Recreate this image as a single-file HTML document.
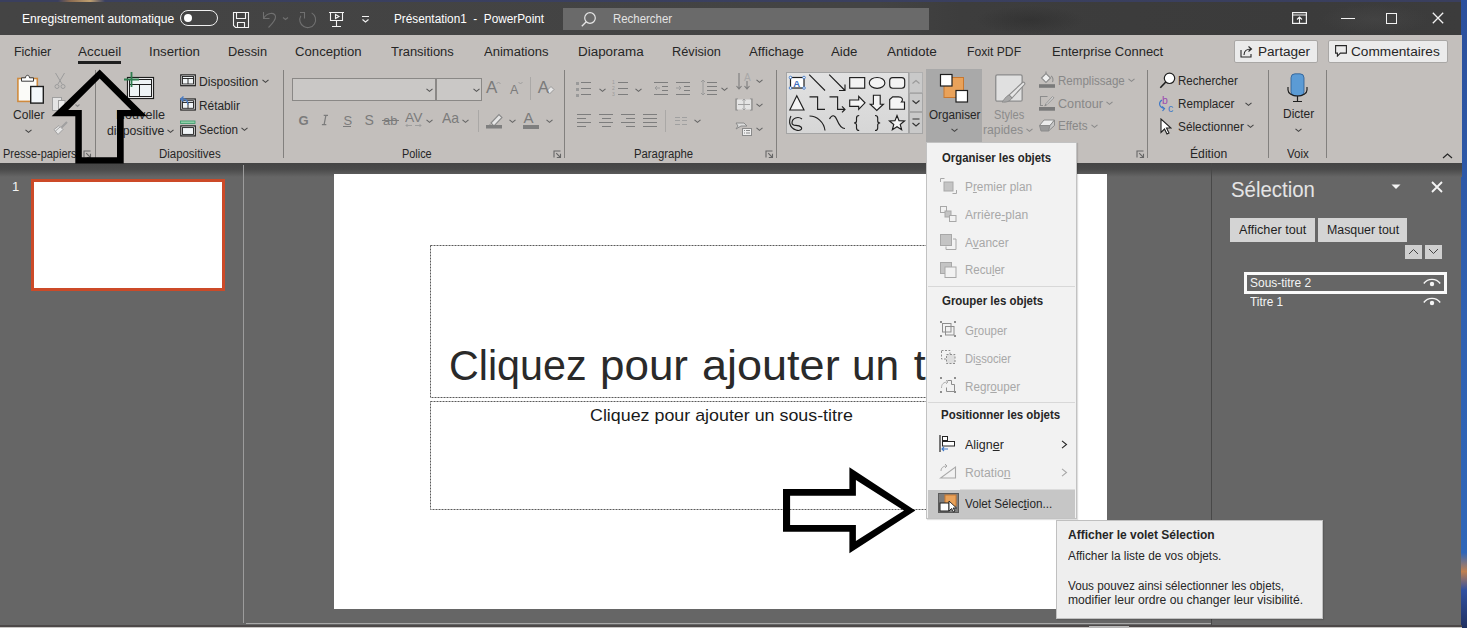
<!DOCTYPE html><html><head><meta charset="utf-8"><style>
html,body{margin:0;padding:0}
body{width:1467px;height:628px;overflow:hidden;position:relative;font-family:"Liberation Sans",sans-serif}
.a{position:absolute}
.t{position:absolute;line-height:0;white-space:pre}
</style></head><body>
<div class="a" style="left:0px;top:0px;width:1467px;height:628px;background:#666666"></div><div class="a" style="left:0px;top:0px;width:1462px;height:35px;background:linear-gradient(90deg,#444 0,#434343 880px,#3d3d3d 960px,#3b3b3b 1300px,#3c3c3c 100%)"></div><div class="a" style="left:1320px;top:4px;width:110px;height:30px;background:radial-gradient(ellipse at center,rgba(80,80,80,.35),rgba(80,80,80,0) 70%)"></div><div class="a" style="left:975px;top:6px;width:110px;height:28px;background:radial-gradient(ellipse at center,rgba(40,40,40,.45),rgba(40,40,40,0) 70%)"></div><div class="a" style="left:0px;top:0px;width:1462px;height:2px;background:linear-gradient(90deg,#3a3f5e 0,#3a3f5e 58px,#8a6a50 70px,#c0a070 90px,#3a4060 105px,#3a3f5e 100%)"></div><div class="a" style="left:1461px;top:0px;width:6px;height:628px;background:linear-gradient(#2b4f9c,#3060b0 50%,#2f66b8 88%,#c08050 91%,#3050a0 94%,#203060)"></div><div class="a" style="left:0px;top:35px;width:1462px;height:128px;background:#c3bfbc"></div><div class="a" style="left:0px;top:163px;width:1462px;height:14px;background:linear-gradient(#444 0,#4a4a4a 45%,#666666 100%)"></div><div class="a" style="left:180px;top:10px;width:38px;height:16px;box-sizing:border-box;border:1.5px solid #f0f0f0;border-radius:8px"></div><div class="a" style="left:184px;top:14px;width:8px;height:8px;background:#fff;border-radius:50%"></div><svg class="a" style="left:232px;top:11px;" width="18" height="18" viewBox="0 0 18 18"><path d="M1.5 1.5H16.5V16.5H3.5L1.5 14.5Z M4.5 1.5V7.5H13.5V1.5 M5.5 16.5V11.5H12.5V16.5" fill="none" stroke="#f4f4f4" stroke-width="1.1"/></svg><svg class="a" style="left:261px;top:10px;" width="30" height="20" viewBox="0 0 30 20"><path d="M2.5 2V8.5H8.5 M2.8 8C6 3 13.5 1.5 14.5 6.5C15 10 11 14 7.5 17.5 M22 7.5L24.5 9.5L27 7.5" fill="none" stroke="#707070" stroke-width="1.1"/></svg><svg class="a" style="left:298px;top:10px;" width="20" height="20" viewBox="0 0 20 20"><path d="M13.65 2.86A7.9 7.9 0 1 1 2.86 5.75 M2 2.5H6.5V8.4" fill="none" stroke="#707070" stroke-width="1.1"/></svg><svg class="a" style="left:328px;top:11px;" width="18" height="18" viewBox="0 0 18 18"><path d="M1 1.5H16 M2.5 1.5V9.5H14.5V1.5 M7.5 3.5L11 5.5L7.5 7.5Z M8.5 9.5V15.5 M4 15.5H13" fill="none" stroke="#f4f4f4" stroke-width="1.1"/></svg><svg class="a" style="left:360px;top:14px;" width="12" height="10" viewBox="0 0 12 10"><path d="M2 2.5H9 M2.5 5.5L5.5 8L8.5 5.5" fill="none" stroke="#f4f4f4" stroke-width="1.1"/></svg><div class="a" style="left:563px;top:8px;width:366px;height:22px;background:#6a6a6a"></div><svg class="a" style="left:580px;top:11px;" width="18" height="16" viewBox="0 0 18 16"><circle cx="10" cy="7" r="5.3" fill="none" stroke="#e6e6e6" stroke-width="1.2"/><path d="M6.3 10.7l-4.5 4.5" stroke="#e6e6e6" stroke-width="1.3"/></svg><svg class="a" style="left:1292px;top:12px;" width="15" height="12" viewBox="0 0 15 12"><rect x="0.6" y="0.6" width="13.8" height="10.8" fill="none" stroke="#f2f2f2" stroke-width="1.2"/><path d="M0.6 3h13.8M7.5 11v-6M5 7.5l2.5-2.5l2.5 2.5" fill="none" stroke="#f2f2f2" stroke-width="1.1"/></svg><div class="a" style="left:1341px;top:18px;width:14px;height:1.2px;background:#f2f2f2"></div><div class="a" style="left:1386px;top:13px;width:11px;height:11px;box-sizing:border-box;border:1.2px solid #f2f2f2"></div><svg class="a" style="left:1432px;top:12px;" width="12" height="12" viewBox="0 0 12 12"><path d="M0.8 0.8l10.4 10.4M11.2 0.8l-10.4 10.4" stroke="#f2f2f2" stroke-width="1.3"/></svg><div class="a" style="left:78px;top:61px;width:43px;height:2.6px;background:#1f1f1f"></div><div class="a" style="left:1234px;top:40px;width:84px;height:22.5px;box-sizing:border-box;background:#ebebeb;border:1px solid #a9a7a5;border-radius:2px"></div><svg class="a" style="left:1240px;top:45px;" width="14" height="13" viewBox="0 0 14 13"><path d="M1 5v7h10v-3" fill="none" stroke="#262626" stroke-width="1.1"/><path d="M4 10c0-4 3-6 7-6M8.5 1.5l3 2.5l-3 2.5" fill="none" stroke="#262626" stroke-width="1.1"/></svg><div class="a" style="left:1328px;top:40px;width:120px;height:22.5px;box-sizing:border-box;background:#ebebeb;border:1px solid #a9a7a5;border-radius:2px"></div><svg class="a" style="left:1335px;top:45px;" width="12" height="12" viewBox="0 0 12 12"><path d="M0.6 0.6h10.8v7.5h-6l-3 3v-3h-1.8z" fill="none" stroke="#262626" stroke-width="1.1"/></svg><div class="a" style="left:95px;top:70px;width:1px;height:88px;background:#82807e"></div><div class="a" style="left:283px;top:70px;width:1px;height:88px;background:#82807e"></div><div class="a" style="left:564px;top:70px;width:1px;height:88px;background:#82807e"></div><div class="a" style="left:776px;top:70px;width:1px;height:88px;background:#82807e"></div><div class="a" style="left:1147px;top:70px;width:1px;height:88px;background:#82807e"></div><div class="a" style="left:1268px;top:70px;width:1px;height:88px;background:#82807e"></div><div class="a" style="left:1326px;top:70px;width:1px;height:88px;background:#82807e"></div><svg class="a" style="left:83px;top:149.5px;" width="9" height="9" viewBox="0 0 9 9"><path d="M1 7.5V1H7.5 M3.2 3.2L7.5 7.5 M7.5 3.8V7.5H3.8" fill="none" stroke="#666" stroke-width="1.1"/></svg><svg class="a" style="left:553px;top:149.5px;" width="9" height="9" viewBox="0 0 9 9"><path d="M1 7.5V1H7.5 M3.2 3.2L7.5 7.5 M7.5 3.8V7.5H3.8" fill="none" stroke="#666" stroke-width="1.1"/></svg><svg class="a" style="left:765px;top:149.5px;" width="9" height="9" viewBox="0 0 9 9"><path d="M1 7.5V1H7.5 M3.2 3.2L7.5 7.5 M7.5 3.8V7.5H3.8" fill="none" stroke="#666" stroke-width="1.1"/></svg><svg class="a" style="left:1135.5px;top:149.5px;" width="9" height="9" viewBox="0 0 9 9"><path d="M1 7.5V1H7.5 M3.2 3.2L7.5 7.5 M7.5 3.8V7.5H3.8" fill="none" stroke="#666" stroke-width="1.1"/></svg><svg class="a" style="left:16px;top:72px;" width="30" height="33" viewBox="0 0 30 33"><rect x="1.9" y="6.5" width="19.4" height="22.9" fill="#fbfbf8" stroke="#cf8a3e" stroke-width="1.6"/><path d="M5.5 9.2V5.8H9.5C9.5 2.5 13.5 2.5 13.5 5.8H17.5V9.2Z" fill="#fff" stroke="#3a3a3a" stroke-width="1"/><rect x="14.7" y="14.5" width="12.6" height="16.6" fill="#f4f8fb" stroke="#1e1e1e" stroke-width="1.4"/></svg><svg class="a" style="left:24.5px;top:128.5px;" width="7" height="5" viewBox="0 0 7 5"><path d="M0.5 0.8l3.0 2.5l3.0 -2.5" fill="none" stroke="#444" stroke-width="1.1"/></svg><svg class="a" style="left:54px;top:72px;" width="12" height="18" viewBox="0 0 12 18"><path d="M1.5 1L8 12M10.5 1L4 12" stroke="#9c9c9c" stroke-width="1"/><circle cx="3" cy="14.5" r="2" fill="none" stroke="#9c9c9c"/><circle cx="9" cy="14.5" r="2" fill="none" stroke="#9c9c9c"/></svg><svg class="a" style="left:51px;top:96px;" width="30" height="16" viewBox="0 0 30 16"><rect x="1.5" y="1.5" width="9" height="13" fill="#e4e4e4" stroke="#a0a0a0"/><rect x="7.5" y="4.5" width="6.5" height="10" fill="#ececec" stroke="#a0a0a0"/><path d="M24.5 8.5L26.5 10.5L28.5 8.5" fill="none" stroke="#8a8a8a" stroke-width="1.1"/></svg><svg class="a" style="left:52px;top:120px;" width="17" height="16" viewBox="0 0 17 16"><path d="M15 2L9.5 7.5" stroke="#a0a0a0" stroke-width="2.2"/><path d="M2 9.5L7 5.5L11 9.5L6 14.5Z" fill="#e6e6e6" stroke="#a0a0a0"/><path d="M3.5 11L8 7" stroke="#a0a0a0"/></svg><svg class="a" style="left:123px;top:71px;" width="32" height="29" viewBox="0 0 32 29"><rect x="4.5" y="6.5" width="26" height="21" fill="#fff" stroke="#1e1e1e" stroke-width="1.2"/><rect x="6.5" y="8.5" width="22" height="17" fill="#eef3f5" stroke="#1e1e1e" stroke-width="1"/><path d="M6.5 13.5H28.5M16.5 13.5V25.5" stroke="#1e1e1e" stroke-width="1"/><path d="M8.5 1V16M1 8.5H16" stroke="#2e7d4f" stroke-width="1.8"/></svg><svg class="a" style="left:167px;top:129px;" width="7" height="5" viewBox="0 0 7 5"><path d="M0.5 0.8l3.0 2.5l3.0 -2.5" fill="none" stroke="#444" stroke-width="1.1"/></svg><svg class="a" style="left:179px;top:73px;" width="18" height="15" viewBox="0 0 18 15"><rect x="1.8" y="1.9" width="14.5" height="10.8" fill="#fff" stroke="#1e1e1e" stroke-width="1.2"/><rect x="3.5" y="3.5" width="11" height="7.5" fill="#f0f4f6" stroke="#1e1e1e" stroke-width="0.9"/><path d="M3.5 5.5H14.5M9 5.5V11" stroke="#1e1e1e" stroke-width="0.9"/></svg><svg class="a" style="left:261.5px;top:78.8px;" width="7" height="5" viewBox="0 0 7 5"><path d="M0.5 0.8l3.0 2.5l3.0 -2.5" fill="none" stroke="#444" stroke-width="1.1"/></svg><svg class="a" style="left:179px;top:95px;" width="18" height="17" viewBox="0 0 18 17"><rect x="1.8" y="4" width="14.5" height="11" fill="#fff" stroke="#1e1e1e" stroke-width="1.2"/><rect x="3.5" y="5.7" width="11" height="7.6" fill="#f0f4f6" stroke="#1e1e1e" stroke-width="0.9"/><path d="M3.5 7.5H14.5M9 7.5V13.3" stroke="#1e1e1e" stroke-width="0.9"/><path d="M9 9.5C9 5 6 3.5 2.5 4M4.5 1.5L1.8 4L4.5 6.5" fill="none" stroke="#4a7cc4" stroke-width="1.4"/></svg><svg class="a" style="left:179px;top:119px;" width="18" height="19" viewBox="0 0 18 19"><rect x="1.5" y="2" width="14.5" height="2.5" fill="#8fd0a8" stroke="#3a9a6a" stroke-width="0.8"/><rect x="1.8" y="6.9" width="14.5" height="10" fill="#fff" stroke="#1e1e1e" stroke-width="1.2"/><rect x="3.5" y="8.6" width="11" height="6.8" fill="#f0f4f6" stroke="#1e1e1e" stroke-width="0.9"/></svg><svg class="a" style="left:241px;top:127.3px;" width="7" height="5" viewBox="0 0 7 5"><path d="M0.5 0.8l3.0 2.5l3.0 -2.5" fill="none" stroke="#444" stroke-width="1.1"/></svg><div class="a" style="left:292px;top:78px;width:144px;height:23px;box-sizing:border-box;background:#cac8c6;border:1px solid #8a8886"></div><div class="a" style="left:436px;top:78px;width:46px;height:23px;box-sizing:border-box;background:#cac8c6;border:1px solid #8a8886"></div><svg class="a" style="left:426px;top:87.5px;" width="7" height="5" viewBox="0 0 7 5"><path d="M0.5 0.8l3.0 2.5l3.0 -2.5" fill="none" stroke="#555" stroke-width="1.1"/></svg><svg class="a" style="left:473px;top:87.5px;" width="7" height="5" viewBox="0 0 7 5"><path d="M0.5 0.8l3.0 2.5l3.0 -2.5" fill="none" stroke="#555" stroke-width="1.1"/></svg><svg class="a" style="left:320px;top:114px;" width="10" height="12" viewBox="0 0 10 12"><path d="M3.7 1.4H8 M1.9 10.6H6.3 M5.9 1.4L4.1 10.6" fill="none" stroke="#7b7b7b" stroke-width="1.2"/></svg><div class="a" style="left:343px;top:126px;width:8px;height:1.2px;background:#7b7b7b"></div><div class="a" style="left:382px;top:120px;width:17px;height:1.2px;background:#7b7b7b"></div><svg class="a" style="left:405px;top:123px;" width="17" height="5" viewBox="0 0 17 5"><path d="M1 2.5h6M10 2.5h6M2.5 1l-1.5 1.5l1.5 1.5M14.5 1l1.5 1.5l-1.5 1.5" fill="none" stroke="#9a9a9a" stroke-width="0.9"/></svg><svg class="a" style="left:425.5px;top:118.5px;" width="7" height="5" viewBox="0 0 7 5"><path d="M0.5 0.8l3.0 2.5l3.0 -2.5" fill="none" stroke="#666" stroke-width="1.1"/></svg><svg class="a" style="left:496px;top:81px;" width="5" height="4" viewBox="0 0 5 4"><path d="M0.5 3l2-2l2 2" fill="none" stroke="#9a9a9a" stroke-width="0.9"/></svg><svg class="a" style="left:518px;top:81px;" width="5" height="4" viewBox="0 0 5 4"><path d="M0.5 1l2 2l2-2" fill="none" stroke="#9a9a9a" stroke-width="0.9"/></svg><div class="a" style="left:530px;top:77px;width:1px;height:23px;background:#aaa8a6"></div><svg class="a" style="left:545px;top:85px;" width="10" height="10" viewBox="0 0 10 10"><path d="M1.5 6l4.5-4.5l3 3l-4.5 4.5z" fill="#e6e6e6" stroke="#9a9a9a" stroke-width="1"/></svg><svg class="a" style="left:461.5px;top:118.5px;" width="7" height="5" viewBox="0 0 7 5"><path d="M0.5 0.8l3.0 2.5l3.0 -2.5" fill="none" stroke="#666" stroke-width="1.1"/></svg><div class="a" style="left:478px;top:110px;width:1px;height:22px;background:#aaa8a6"></div><svg class="a" style="left:486px;top:113px;" width="17" height="16" viewBox="0 0 17 16"><path d="M5 10l8-8.5l3 3l-8 8.5z" fill="#e6e6e6" stroke="#8a8a8a" stroke-width="1.1"/><path d="M4 11l-2 2h4" fill="#8a8a8a"/><rect x="0" y="12" width="16" height="3.5" fill="#7f7f7f"/></svg><svg class="a" style="left:508.5px;top:118.8px;" width="7" height="5" viewBox="0 0 7 5"><path d="M0.5 0.8l3.0 2.5l3.0 -2.5" fill="none" stroke="#666" stroke-width="1.1"/></svg><div class="a" style="left:523px;top:125px;width:16px;height:3.5px;background:#7f7f7f"></div><svg class="a" style="left:545.5px;top:118.8px;" width="7" height="5" viewBox="0 0 7 5"><path d="M0.5 0.8l3.0 2.5l3.0 -2.5" fill="none" stroke="#666" stroke-width="1.1"/></svg><div class="a" style="left:576px;top:81.5px;width:3px;height:3px;background:#9a9a9a"></div><div class="a" style="left:576px;top:87.5px;width:3px;height:3px;background:#9a9a9a"></div><div class="a" style="left:576px;top:93.5px;width:3px;height:3px;background:#9a9a9a"></div><div class="a" style="left:581px;top:82px;width:10px;height:1.3px;background:#7d7d7d"></div><div class="a" style="left:581px;top:88px;width:10px;height:1.3px;background:#7d7d7d"></div><div class="a" style="left:581px;top:94px;width:10px;height:1.3px;background:#7d7d7d"></div><svg class="a" style="left:598.5px;top:87.5px;" width="7" height="5" viewBox="0 0 7 5"><path d="M0.5 0.8l3.0 2.5l3.0 -2.5" fill="none" stroke="#666" stroke-width="1.1"/></svg><svg class="a" style="left:612px;top:79px;" width="6" height="17" viewBox="0 0 6 17"><text x="0" y="5" font-size="5" fill="#9a9a9a" font-family="Liberation Sans">1</text><text x="0" y="11" font-size="5" fill="#9a9a9a" font-family="Liberation Sans">2</text><text x="0" y="17" font-size="5" fill="#9a9a9a" font-family="Liberation Sans">3</text></svg><div class="a" style="left:618px;top:82px;width:10px;height:1.3px;background:#7d7d7d"></div><div class="a" style="left:618px;top:88px;width:10px;height:1.3px;background:#7d7d7d"></div><div class="a" style="left:618px;top:94px;width:10px;height:1.3px;background:#7d7d7d"></div><svg class="a" style="left:635px;top:87.5px;" width="7" height="5" viewBox="0 0 7 5"><path d="M0.5 0.8l3.0 2.5l3.0 -2.5" fill="none" stroke="#666" stroke-width="1.1"/></svg><div class="a" style="left:654px;top:82px;width:14px;height:1.3px;background:#7d7d7d"></div><div class="a" style="left:662px;top:86px;width:6px;height:1.3px;background:#7d7d7d"></div><div class="a" style="left:662px;top:90px;width:6px;height:1.3px;background:#7d7d7d"></div><div class="a" style="left:654px;top:94px;width:14px;height:1.3px;background:#7d7d7d"></div><svg class="a" style="left:654px;top:85px;" width="7" height="6" viewBox="0 0 7 6"><path d="M6 3h-5M3 1l-2 2l2 2" fill="none" stroke="#9a9a9a"/></svg><div class="a" style="left:676px;top:82px;width:14px;height:1.3px;background:#7d7d7d"></div><div class="a" style="left:684px;top:86px;width:6px;height:1.3px;background:#7d7d7d"></div><div class="a" style="left:684px;top:90px;width:6px;height:1.3px;background:#7d7d7d"></div><div class="a" style="left:676px;top:94px;width:14px;height:1.3px;background:#7d7d7d"></div><svg class="a" style="left:676px;top:85px;" width="7" height="6" viewBox="0 0 7 6"><path d="M0 3h5M3 1l2 2l-2 2" fill="none" stroke="#9a9a9a"/></svg><svg class="a" style="left:700px;top:79px;" width="6" height="17" viewBox="0 0 6 17"><path d="M3 1v15M1 3l2-2l2 2M1 14l2 2l2-2" fill="none" stroke="#9a9a9a"/></svg><div class="a" style="left:707px;top:82px;width:9.6px;height:1.3px;background:#7d7d7d"></div><div class="a" style="left:707px;top:86px;width:9.6px;height:1.3px;background:#7d7d7d"></div><div class="a" style="left:707px;top:90px;width:9.6px;height:1.3px;background:#7d7d7d"></div><div class="a" style="left:707px;top:94px;width:9.6px;height:1.3px;background:#7d7d7d"></div><svg class="a" style="left:721px;top:87.2px;" width="7" height="5" viewBox="0 0 7 5"><path d="M0.5 0.8l3.0 2.5l3.0 -2.5" fill="none" stroke="#666" stroke-width="1.1"/></svg><div class="a" style="left:577px;top:114px;width:14px;height:1.3px;background:#7d7d7d"></div><div class="a" style="left:577px;top:118px;width:9px;height:1.3px;background:#7d7d7d"></div><div class="a" style="left:577px;top:122px;width:14px;height:1.3px;background:#7d7d7d"></div><div class="a" style="left:577px;top:126px;width:9px;height:1.3px;background:#7d7d7d"></div><div class="a" style="left:599px;top:114px;width:14px;height:1.3px;background:#7d7d7d"></div><div class="a" style="left:602px;top:118px;width:9px;height:1.3px;background:#7d7d7d"></div><div class="a" style="left:599px;top:122px;width:14px;height:1.3px;background:#7d7d7d"></div><div class="a" style="left:602px;top:126px;width:9px;height:1.3px;background:#7d7d7d"></div><div class="a" style="left:621px;top:114px;width:14px;height:1.3px;background:#7d7d7d"></div><div class="a" style="left:626px;top:118px;width:9px;height:1.3px;background:#7d7d7d"></div><div class="a" style="left:621px;top:122px;width:14px;height:1.3px;background:#7d7d7d"></div><div class="a" style="left:626px;top:126px;width:9px;height:1.3px;background:#7d7d7d"></div><div class="a" style="left:643px;top:114px;width:14px;height:1.3px;background:#7d7d7d"></div><div class="a" style="left:643px;top:118px;width:14px;height:1.3px;background:#7d7d7d"></div><div class="a" style="left:643px;top:122px;width:14px;height:1.3px;background:#7d7d7d"></div><div class="a" style="left:643px;top:126px;width:14px;height:1.3px;background:#7d7d7d"></div><div class="a" style="left:665px;top:110px;width:1px;height:22px;background:#aaa8a6"></div><div class="a" style="left:675px;top:117px;width:5px;height:1.3px;background:#a0a0a0"></div><div class="a" style="left:675px;top:120px;width:5px;height:1.3px;background:#a0a0a0"></div><div class="a" style="left:675px;top:124px;width:5px;height:1.3px;background:#a0a0a0"></div><div class="a" style="left:682px;top:117px;width:5px;height:1.3px;background:#a0a0a0"></div><div class="a" style="left:682px;top:120px;width:5px;height:1.3px;background:#a0a0a0"></div><div class="a" style="left:682px;top:124px;width:5px;height:1.3px;background:#a0a0a0"></div><svg class="a" style="left:693.5px;top:118.5px;" width="7" height="5" viewBox="0 0 7 5"><path d="M0.5 0.8l3.0 2.5l3.0 -2.5" fill="none" stroke="#666" stroke-width="1.1"/></svg><svg class="a" style="left:736px;top:72px;" width="16" height="18" viewBox="0 0 16 18"><path d="M3 1v16M0.5 14l2.5 3l2.5-3M11 9v8M8.5 14l2.5 3l2.5-3" fill="none" stroke="#7d7d7d" stroke-width="1.1"/><text x="8" y="9" font-size="10" fill="#a8a8a8" font-family="Liberation Sans">A</text></svg><svg class="a" style="left:756px;top:79px;" width="7" height="5" viewBox="0 0 7 5"><path d="M0.5 0.8l3.0 2.5l3.0 -2.5" fill="none" stroke="#666" stroke-width="1.1"/></svg><svg class="a" style="left:735px;top:98px;" width="18" height="14" viewBox="0 0 18 14"><path d="M3 1h-2v11h2M15 1h2v11h-2" fill="none" stroke="#8a8a8a" stroke-width="1.2"/><rect x="2" y="1.5" width="14" height="10" fill="#e4e4e4"/><path d="M3 6.5h12M9 1l-1.5 1.5M9 1l1.5 1.5M9 1v11M9 12l-1.5-1.5M9 12l1.5-1.5" fill="none" stroke="#a0a0a0" stroke-width="1"/></svg><svg class="a" style="left:756px;top:103.4px;" width="7" height="5" viewBox="0 0 7 5"><path d="M0.5 0.8l3.0 2.5l3.0 -2.5" fill="none" stroke="#666" stroke-width="1.1"/></svg><svg class="a" style="left:735px;top:122px;" width="18" height="14" viewBox="0 0 18 14"><path d="M1 1h8l3 3h-6l-5 3l2-3z" fill="#dcdcdc" stroke="#8a8a8a" stroke-width="1"/><rect x="7.5" y="6.5" width="9" height="7" fill="#eee" stroke="#8a8a8a" stroke-width="1"/><path d="M9 8.5h1M11 8.5h4M9 11h1M11 11h4" stroke="#8a8a8a"/></svg><svg class="a" style="left:756px;top:126.5px;" width="7" height="5" viewBox="0 0 7 5"><path d="M0.5 0.8l3.0 2.5l3.0 -2.5" fill="none" stroke="#666" stroke-width="1.1"/></svg><div class="a" style="left:786px;top:72px;width:123px;height:62px;box-sizing:border-box;background:linear-gradient(#e2e2e2,#d6d6d6);border:1px solid #a4a4a4"></div><div class="a" style="left:909px;top:72px;width:14px;height:21px;box-sizing:border-box;background:#c9c9c9;border:1px solid #b0b0b0"></div><div class="a" style="left:909px;top:93px;width:14px;height:19px;box-sizing:border-box;background:#c9c9c9;border:1px solid #a6a6a6"></div><div class="a" style="left:909px;top:112px;width:14px;height:22px;box-sizing:border-box;background:#c9c9c9;border:1px solid #a6a6a6"></div><svg class="a" style="left:911px;top:79px;" width="10" height="6" viewBox="0 0 10 6"><path d="M1.5 4.5l3.5-3l3.5 3" fill="none" stroke="#9a9a9a" stroke-width="1.1"/></svg><svg class="a" style="left:911px;top:99px;" width="10" height="6" viewBox="0 0 10 6"><path d="M1.5 1.5l3.5 3l3.5-3" fill="none" stroke="#333" stroke-width="1.1"/></svg><svg class="a" style="left:911px;top:117px;" width="10" height="12" viewBox="0 0 10 12"><path d="M1.5 2h7M1.5 6l3.5 3l3.5-3" fill="none" stroke="#333" stroke-width="1.1"/></svg><svg class="a" style="left:784px;top:70px;" width="126" height="66" viewBox="0 0 126 66">
<rect x="6.5" y="7.5" width="13.5" height="10.5" fill="#fff" stroke="#1e1e1e" stroke-width="1.2"/>
<text x="9.3" y="16.6" font-size="9.5" font-weight="bold" fill="#3f6fc0" font-family="Liberation Sans">A</text>
<g fill="#fff" stroke="#3f78c8" stroke-width="0.9"><circle cx="6.5" cy="7.5" r="1.3"/><circle cx="20" cy="7.5" r="1.3"/><circle cx="6.5" cy="18" r="1.3"/><circle cx="20" cy="18" r="1.3"/></g>
<g fill="none" stroke="#1e1e1e" stroke-width="1.15">
<path d="M25.2 4.7L41 20.5"/>
<path d="M45.2 4.7L61 20.5M61 14.5V20.5H55"/>
<path d="M25.5 26.8H33.6V39.4H41"/>
<path d="M45.5 26.8H53.6V39.4H61M58 36.4L61 39.4L58 42.4"/>
<path d="M7 46C4 52 6 58 12 60C16 61.5 19 59 17 57C14 54 8 57 8 53C8 48 14 46 18 49"/>
<path d="M25.5 46C33 46 40 52 41 60.5"/>
<path d="M45.5 49C48 44 51 45 53 50C55 55 58 58.5 61 58.5"/>
<path d="M75.2 45.5C73 45.5 72.5 46 72.5 48V51C72.5 52.5 71.5 53 70 53C71.5 53 72.5 53.5 72.5 55V58C72.5 60 73 60.5 75.2 60.5"/>
<path d="M91 45.5C93.2 45.5 93.7 46 93.7 48V51C93.7 52.5 94.7 53 96.2 53C94.7 53 93.7 53.5 93.7 55V58C93.7 60 93.2 60.5 91 60.5"/>
</g>
<g fill="#f4f4f4" stroke="#1e1e1e" stroke-width="1.15">
<rect x="65.7" y="7.6" width="15" height="10.6"/>
<ellipse cx="93.1" cy="12.9" rx="7.8" ry="5.4"/>
<rect x="105.7" y="7.6" width="15" height="10.6" rx="3"/>
<path d="M12.8 25.8L5.8 40H20Z"/>
<path d="M65.7 30H74.7V26.3L81 32.8L74.7 39.4V36.3H65.7Z"/>
<path d="M89.4 25.2H96.2V34.2H99.4L92.8 40.5L86.2 34.2H89.4Z"/>
<path d="M105.7 29.5L108.7 26.8H114.5C118 26.8 119.8 29.5 117.5 32H120.5V39.2H105.7Z"/>
<path d="M113.00 45.50 L115.00 50.65 L120.51 50.96 L116.23 54.45 L117.64 59.79 L113.00 56.80 L108.36 59.79 L109.77 54.45 L105.49 50.96 L111.00 50.65Z"/>
</g>
</svg><div class="a" style="left:926px;top:69px;width:56px;height:73px;background:#a9a9a9"></div><svg class="a" style="left:939px;top:73px;" width="30" height="30" viewBox="0 0 30 30"><rect x="5" y="4.5" width="19.5" height="20" fill="#e9a25a" stroke="#c87830" stroke-width="1"/><rect x="1.5" y="1.5" width="11.5" height="11.5" fill="#fff" stroke="#1e1e1e" stroke-width="1.2"/><rect x="17" y="17.5" width="11.5" height="11.5" fill="#fff" stroke="#1e1e1e" stroke-width="1.2"/></svg><svg class="a" style="left:950.5px;top:128px;" width="7" height="5" viewBox="0 0 7 5"><path d="M0.5 0.8l3.0 2.5l3.0 -2.5" fill="none" stroke="#444" stroke-width="1.1"/></svg><svg class="a" style="left:993px;top:73px;" width="34" height="31" viewBox="0 0 34 31"><rect x="2.75" y="1.95" width="26.4" height="26.2" rx="1.5" fill="#e0e0e0" stroke="#8c8c8c" stroke-width="1.3"/><path d="M29.5 9.5C31 8.5 32.5 10 31.5 11.5L19 25L16 22Z" fill="#e6e6e6" stroke="#8c8c8c" stroke-width="1.1"/><path d="M16 22L19 25C17 28.5 13 29.5 9 29C11 27 13 23 16 22Z" fill="#a8a8a8" stroke="#8c8c8c" stroke-width="1"/></svg><svg class="a" style="left:1026px;top:128px;" width="7" height="5" viewBox="0 0 7 5"><path d="M0.5 0.8l3.0 2.5l3.0 -2.5" fill="none" stroke="#8a8a8a" stroke-width="1.1"/></svg><svg class="a" style="left:1038px;top:71px;" width="18" height="18" viewBox="0 0 18 18"><path d="M3.5 7L8 2.5L12.5 7L8 11.5Z" fill="#f0f0f0" stroke="#8c8c8c" stroke-width="1.1"/><path d="M8 2.5V0.5M13 5C15 6 15.5 9 14.5 11" fill="none" stroke="#8c8c8c" stroke-width="1.1"/><rect x="1" y="13.2" width="16" height="3.6" fill="#7a7a7a"/></svg><svg class="a" style="left:1127.5px;top:78px;" width="7" height="5" viewBox="0 0 7 5"><path d="M0.5 0.8l3.0 2.5l3.0 -2.5" fill="none" stroke="#8a8a8a" stroke-width="1.1"/></svg><svg class="a" style="left:1038px;top:95px;" width="18" height="17" viewBox="0 0 18 17"><path d="M9.5 1.5H2.5V10.5H5" fill="none" stroke="#8c8c8c" stroke-width="1.1"/><path d="M15.8 2.8L9 9.6L6.8 11L8 8.6L14.6 1.6Z" fill="#e6e6e6" stroke="#8c8c8c" stroke-width="1"/><rect x="1" y="12" width="16" height="3.7" fill="#7a7a7a"/></svg><svg class="a" style="left:1105.5px;top:101px;" width="7" height="5" viewBox="0 0 7 5"><path d="M0.5 0.8l3.0 2.5l3.0 -2.5" fill="none" stroke="#8a8a8a" stroke-width="1.1"/></svg><svg class="a" style="left:1038px;top:118px;" width="18" height="15" viewBox="0 0 18 15"><path d="M1.5 7.5L6 2H16.5L12 7.5Z" fill="#ececec" stroke="#8c8c8c" stroke-width="1"/><path d="M1.5 7.5L3 13H10.5L12 7.5Z" fill="#9a9a9a" stroke="#8c8c8c" stroke-width="1"/><path d="M12 7.5L16.5 2V7.5L10.5 13Z" fill="#c6c6c6" stroke="#8c8c8c" stroke-width="1"/></svg><svg class="a" style="left:1091px;top:124px;" width="7" height="5" viewBox="0 0 7 5"><path d="M0.5 0.8l3.0 2.5l3.0 -2.5" fill="none" stroke="#8a8a8a" stroke-width="1.1"/></svg><svg class="a" style="left:1159px;top:72px;" width="17" height="17" viewBox="0 0 17 17"><circle cx="10.5" cy="6.3" r="5.2" fill="#fff" stroke="#1e1e1e" stroke-width="1.2"/><path d="M6.8 10l-5.5 5.8" stroke="#1e1e1e" stroke-width="1.6"/></svg><svg class="a" style="left:1158px;top:94px;" width="18" height="18" viewBox="0 0 18 18"><text x="4" y="9.5" font-size="10.5" fill="#9a48b0" font-family="Liberation Sans">b</text><text x="10" y="17.5" font-size="10.5" fill="#3f78c8" font-family="Liberation Sans">c</text><path d="M4 6C0.5 8 0.5 13 6 14.5M4 12.5L6.5 14.5L4.5 17" fill="none" stroke="#3f78c8" stroke-width="1.2"/></svg><svg class="a" style="left:1245px;top:101.5px;" width="7" height="5" viewBox="0 0 7 5"><path d="M0.5 0.8l3.0 2.5l3.0 -2.5" fill="none" stroke="#444" stroke-width="1.1"/></svg><svg class="a" style="left:1160px;top:118px;" width="12" height="17" viewBox="0 0 12 17"><path d="M1 1v13.5l3.5-3.5l2.5 5l2-1l-2.5-5h4.5z" fill="#fff" stroke="#1e1e1e" stroke-width="1.1"/></svg><svg class="a" style="left:1247px;top:124.4px;" width="7" height="5" viewBox="0 0 7 5"><path d="M0.5 0.8l3.0 2.5l3.0 -2.5" fill="none" stroke="#444" stroke-width="1.1"/></svg><svg class="a" style="left:1286px;top:73px;" width="22" height="30" viewBox="0 0 22 30"><rect x="5" y="0.8" width="13" height="22" rx="4" fill="#5b9bd5" stroke="#2a5a90" stroke-width="0.8"/><path d="M2 14v3a9.5 6 0 0 0 19 0v-3M11.5 23v5M7 28.5h9" fill="none" stroke="#1e1e1e" stroke-width="1.2"/></svg><svg class="a" style="left:1294.5px;top:128.2px;" width="7" height="5" viewBox="0 0 7 5"><path d="M0.5 0.8l3.0 2.5l3.0 -2.5" fill="none" stroke="#444" stroke-width="1.1"/></svg><svg class="a" style="left:1442px;top:153px;" width="11" height="6" viewBox="0 0 11 6"><path d="M1 5l4.5-4l4.5 4" fill="none" stroke="#262626" stroke-width="1.2"/></svg><div class="a" style="left:31px;top:179px;width:194px;height:112px;box-sizing:border-box;background:#fff;border:3px solid #cc4a28"></div><div class="a" style="left:243px;top:165px;width:1px;height:458px;background:#9c9c9c"></div><div class="a" style="left:334px;top:174px;width:773px;height:435px;background:#fff"></div><div class="a" style="left:246px;top:623px;width:965px;height:1px;background:#a8a8a8"></div><div class="a" style="left:0px;top:625px;width:1462px;height:2px;background:#4c4848"></div><div class="a" style="left:0px;top:627px;width:1462px;height:1px;background:#c8c6c4"></div><div class="a" style="left:1089px;top:626px;width:40px;height:2px;background:#b8b8b8"></div><svg class="a" style="left:0px;top:0px;" width="1467" height="628" viewBox="0 0 1467 628"><path d="M430.5 245.5H1011.5V397.5H430.5Z" fill="none" stroke="#5a5a5a" stroke-width="1" stroke-dasharray="2 1"/></svg><svg class="a" style="left:0px;top:0px;" width="1467" height="628" viewBox="0 0 1467 628"><path d="M430.5 401.5H1011.5V509.5H430.5Z" fill="none" stroke="#5a5a5a" stroke-width="1" stroke-dasharray="2 1"/></svg><div class="a" style="left:1211px;top:163px;width:1px;height:462px;background:#484848"></div><svg class="a" style="left:1391px;top:184px;" width="10" height="5" viewBox="0 0 10 5"><path d="M0.5 0.5h9l-4.5 4.5z" fill="#f4f4f4"/></svg><svg class="a" style="left:1431px;top:181px;" width="12" height="12" viewBox="0 0 12 12"><path d="M1 1l10 10M11 1l-10 10" stroke="#f4f4f4" stroke-width="1.8"/></svg><div class="a" style="left:1230px;top:218px;width:85px;height:24px;background:#d4d4d4"></div><div class="a" style="left:1318px;top:218px;width:89px;height:24px;background:#d4d4d4"></div><div class="a" style="left:1405px;top:245px;width:17px;height:14px;background:#cfcfcf"></div><svg class="a" style="left:1408px;top:248px;" width="11" height="7" viewBox="0 0 11 7"><path d="M1 6l4.5-4.5l4.5 4.5" fill="none" stroke="#444" stroke-width="1"/></svg><div class="a" style="left:1425px;top:245px;width:17px;height:14px;background:#cfcfcf"></div><svg class="a" style="left:1428px;top:248px;" width="11" height="7" viewBox="0 0 11 7"><path d="M1 1l4.5 4.5l4.5-4.5" fill="none" stroke="#444" stroke-width="1"/></svg><div class="a" style="left:1244px;top:272px;width:203px;height:22px;box-sizing:border-box;border:3px solid #fafafa"></div><svg class="a" style="left:1423px;top:278px;" width="18" height="9" viewBox="0 0 18 9"><path d="M0.8 5.5c4-5.5 12.4-5.5 16.4 0" fill="none" stroke="#f4f4f4" stroke-width="1.4"/><circle cx="9" cy="6" r="2.2" fill="#f4f4f4"/></svg><svg class="a" style="left:1423px;top:297px;" width="18" height="9" viewBox="0 0 18 9"><path d="M0.8 5.5c4-5.5 12.4-5.5 16.4 0" fill="none" stroke="#f4f4f4" stroke-width="1.4"/><circle cx="9" cy="6" r="2.2" fill="#f4f4f4"/></svg><svg class="a" style="left:0px;top:0px;pointer-events:none;z-index:5" width="1467" height="628" viewBox="0 0 1467 628"><path fill-rule="evenodd" fill="#000" d="M99.7 69.5L147 116.3H123.7V163.4H75.3V116.3H51.6Z M99.7 78.6L68.2 110H81.8V157.3H117V110H131.1Z"/><path fill-rule="evenodd" fill="#000" d="M783 489.1H849.4V467.2L915.4 510.6L849.4 553.2V531.7H783Z M790.1 495.8V525H855.9V540.9L904 510.6L855.9 479.9V495.8Z"/></svg><div class="a" style="left:926px;top:142px;width:151px;height:377px;box-sizing:border-box;background:#f2f2f2;border:1px solid #c2c2c2;box-shadow:1px 1px 1px rgba(0,0,0,.12);z-index:6"></div><div class="a" style="left:928px;top:286px;width:147px;height:1px;background:#d8d8d8;z-index:7"></div><div class="a" style="left:928px;top:401.5px;width:147px;height:1px;background:#d8d8d8;z-index:7"></div><svg class="a" style="left:1061px;top:440px;z-index:7" width="7" height="9" viewBox="0 0 7 9"><path d="M1 0.8l4.5 3.7l-4.5 3.7" fill="none" stroke="#262626" stroke-width="1.1"/></svg><svg class="a" style="left:1061px;top:468px;z-index:7" width="7" height="9" viewBox="0 0 7 9"><path d="M1 0.8l4.5 3.7l-4.5 3.7" fill="none" stroke="#a8a8a8" stroke-width="1.1"/></svg><div class="a" style="left:960px;top:488.5px;width:115px;height:1px;background:#dcdcdc;z-index:7"></div><div class="a" style="left:928px;top:490px;width:147px;height:28px;background:#c6c6c6;z-index:7"></div><svg class="a" style="left:940px;top:178px;z-index:7" width="17" height="16" viewBox="0 0 17 16"><rect x="4" y="4" width="9" height="9" fill="#c4c4c4" stroke="#a8a8a8"/><path d="M0.5 4v-3.5h4M16.5 12v3.5h-4" fill="none" stroke="#a8a8a8"/></svg><svg class="a" style="left:940px;top:206px;z-index:7" width="17" height="16" viewBox="0 0 17 16"><rect x="0.5" y="0.5" width="6" height="6" fill="none" stroke="#a8a8a8"/><rect x="5" y="5" width="6" height="6" fill="#c4c4c4" stroke="#a8a8a8"/><rect x="9.5" y="9.5" width="6.5" height="6" fill="#f2f2f2" stroke="#a8a8a8"/></svg><svg class="a" style="left:940px;top:234px;z-index:7" width="17" height="16" viewBox="0 0 17 16"><rect x="0.5" y="0.5" width="11" height="11" fill="#c4c4c4" stroke="#a8a8a8"/><path d="M13 5h3v10.5h-10v-3" fill="none" stroke="#a8a8a8"/></svg><svg class="a" style="left:940px;top:262px;z-index:7" width="17" height="16" viewBox="0 0 17 16"><rect x="0.5" y="0.5" width="11" height="11" fill="#c4c4c4" stroke="#a8a8a8"/><rect x="5" y="5" width="11" height="10.5" fill="#f2f2f2" stroke="#a8a8a8"/></svg><svg class="a" style="left:940px;top:321px;z-index:7" width="17" height="17" viewBox="0 0 17 17"><g fill="#8e8e8e"><rect x="0" y="0" width="2" height="2"/><rect x="14" y="0" width="2" height="2"/><rect x="0" y="14" width="2" height="2"/><rect x="14" y="14" width="2" height="2"/></g><rect x="2.5" y="2.5" width="8.5" height="8.5" fill="none" stroke="#8e8e8e"/><rect x="5.5" y="5.5" width="8.5" height="8.5" fill="none" stroke="#8e8e8e"/></svg><svg class="a" style="left:940px;top:349px;z-index:7" width="17" height="17" viewBox="0 0 17 17"><rect x="1.5" y="1.5" width="8.5" height="8.5" fill="none" stroke="#8e8e8e" stroke-dasharray="2 1.5"/><rect x="6.5" y="5.5" width="8.5" height="9" fill="#dedede" stroke="#8e8e8e" stroke-dasharray="2 1.5"/></svg><svg class="a" style="left:940px;top:377px;z-index:7" width="17" height="17" viewBox="0 0 17 17"><g fill="#8e8e8e"><rect x="0" y="0" width="2" height="2"/><rect x="14" y="0" width="2" height="2"/><rect x="0" y="14" width="2" height="2"/><rect x="14" y="14" width="2" height="2"/></g><path d="M7.5 3.5H11.5V7.5H14.5V14.5H6.5V10.5" fill="none" stroke="#8e8e8e"/><path d="M1.5 11C1.5 7 3.5 5 8 5M6 3L8 5L6 7" fill="none" stroke="#b0b0b0"/></svg><svg class="a" style="left:939px;top:435px;z-index:7" width="18" height="17" viewBox="0 0 18 17"><path d="M1 0v17" stroke="#262626" stroke-width="1.2"/><rect x="3.5" y="1.5" width="5" height="4" fill="#fff" stroke="#262626"/><rect x="3.5" y="6.5" width="12" height="4.5" fill="#fff" stroke="#262626"/><path d="M9 14h-6M5 12l-2 2l2 2" fill="none" stroke="#3f78c8" stroke-width="1.1"/></svg><svg class="a" style="left:939px;top:463px;z-index:7" width="18" height="17" viewBox="0 0 18 17"><path d="M1.5 15h15v-11z" fill="none" stroke="#a8a8a8" stroke-width="1.1"/><path d="M2 8c0-3 2-5 6-5M6 1l2 2l-2 2" fill="none" stroke="#a8a8a8"/></svg><svg class="a" style="left:938px;top:493px;z-index:7" width="21" height="20" viewBox="0 0 21 20"><rect x="0.5" y="0.5" width="20" height="19" fill="#7c7c7c" stroke="#5a5a5a"/><rect x="7" y="2" width="11" height="11" fill="#e9a25a" stroke="#c87830"/><rect x="2" y="10" width="9" height="8" fill="#fff" stroke="#1e1e1e"/><path d="M11 8v10l2.5-2.5l2 3.5l1.5-1l-2-3h3.5z" fill="#fff" stroke="#1e1e1e" stroke-width="0.9"/></svg><div class="a" style="left:1056px;top:520px;width:267px;height:99px;box-sizing:border-box;background:#eeeeee;border:1px solid #c0c0c0;box-shadow:1px 1px 1px rgba(0,0,0,.1);z-index:8"></div>
<div class="t" style="left:22px;top:18.90px;font-size:12.5px;color:#ffffff;font-weight:400;transform:scaleX(0.9690);transform-origin:0 0;">Enregistrement automatique</div><div class="t" style="left:394.3px;top:19.40px;font-size:12.5px;color:#ffffff;font-weight:400;transform:scaleX(0.9435);transform-origin:0 0;">Présentation1  -  PowerPoint</div><div class="t" style="left:612.5px;top:19.40px;font-size:12.5px;color:#e3e3e3;font-weight:400;transform:scaleX(0.9145);transform-origin:0 0;">Rechercher</div><div class="t" style="left:13.8px;top:51.90px;font-size:12.5px;color:#262626;font-weight:400;transform:scaleX(0.9913);transform-origin:0 0;">Fichier</div><div class="t" style="left:78.2px;top:51.90px;font-size:12.5px;color:#262626;font-weight:400;transform:scaleX(1.0743);transform-origin:0 0;">Accueil</div><div class="t" style="left:149px;top:51.90px;font-size:12.5px;color:#262626;font-weight:400;transform:scaleX(1.0630);transform-origin:0 0;">Insertion</div><div class="t" style="left:228px;top:51.90px;font-size:12.5px;color:#262626;font-weight:400;transform:scaleX(1.0211);transform-origin:0 0;">Dessin</div><div class="t" style="left:295.3px;top:51.90px;font-size:12.5px;color:#262626;font-weight:400;transform:scaleX(1.0524);transform-origin:0 0;">Conception</div><div class="t" style="left:391px;top:51.90px;font-size:12.5px;color:#262626;font-weight:400;transform:scaleX(1.0341);transform-origin:0 0;">Transitions</div><div class="t" style="left:484.3px;top:51.90px;font-size:12.5px;color:#262626;font-weight:400;transform:scaleX(1.0438);transform-origin:0 0;">Animations</div><div class="t" style="left:578px;top:51.90px;font-size:12.5px;color:#262626;font-weight:400;transform:scaleX(1.0744);transform-origin:0 0;">Diaporama</div><div class="t" style="left:672px;top:51.90px;font-size:12.5px;color:#262626;font-weight:400;transform:scaleX(1.0185);transform-origin:0 0;">Révision</div><div class="t" style="left:749px;top:51.90px;font-size:12.5px;color:#262626;font-weight:400;transform:scaleX(1.0590);transform-origin:0 0;">Affichage</div><div class="t" style="left:831.2px;top:51.90px;font-size:12.5px;color:#262626;font-weight:400;transform:scaleX(1.0574);transform-origin:0 0;">Aide</div><div class="t" style="left:887px;top:51.90px;font-size:12.5px;color:#262626;font-weight:400;transform:scaleX(1.0856);transform-origin:0 0;">Antidote</div><div class="t" style="left:967px;top:51.90px;font-size:12.5px;color:#262626;font-weight:400;transform:scaleX(0.9731);transform-origin:0 0;">Foxit PDF</div><div class="t" style="left:1052px;top:51.90px;font-size:12.5px;color:#262626;font-weight:400;transform:scaleX(1.0395);transform-origin:0 0;">Enterprise Connect</div><div class="t" style="left:1257.5px;top:51.80px;font-size:12.5px;color:#262626;font-weight:400;transform:scaleX(1.0866);transform-origin:0 0;">Partager</div><div class="t" style="left:1351.3px;top:51.80px;font-size:12.5px;color:#262626;font-weight:400;transform:scaleX(1.0914);transform-origin:0 0;">Commentaires</div><div class="t" style="left:2.5px;top:153.50px;font-size:12px;color:#262626;font-weight:400;transform:scaleX(0.9119);transform-origin:0 0;">Presse-papiers</div><div class="t" style="left:158.7px;top:153.50px;font-size:12px;color:#262626;font-weight:400;transform:scaleX(0.9527);transform-origin:0 0;">Diapositives</div><div class="t" style="left:401.6px;top:153.50px;font-size:12px;color:#262626;font-weight:400;transform:scaleX(0.9083);transform-origin:0 0;">Police</div><div class="t" style="left:633.5px;top:153.50px;font-size:12px;color:#262626;font-weight:400;transform:scaleX(0.9428);transform-origin:0 0;">Paragraphe</div><div class="t" style="left:1189.5px;top:153.50px;font-size:12px;color:#262626;font-weight:400;transform:scaleX(1.0140);transform-origin:0 0;">Édition</div><div class="t" style="left:1287px;top:153.50px;font-size:12px;color:#262626;font-weight:400;transform:scaleX(0.9587);transform-origin:0 0;">Voix</div><div class="t" style="left:12.7px;top:114.60px;font-size:12.5px;color:#262626;font-weight:400;transform:scaleX(0.9632);transform-origin:0 0;">Coller</div><div class="t" style="left:116px;top:115.00px;font-size:12.5px;color:#262626;font-weight:400;transform:scaleX(1.0076);transform-origin:0 0;">Nouvelle</div><div class="t" style="left:106.5px;top:131.00px;font-size:12.5px;color:#262626;font-weight:400;transform:scaleX(0.9829);transform-origin:0 0;">dispositive</div><div class="t" style="left:199.3px;top:81.80px;font-size:12.5px;color:#262626;font-weight:400;transform:scaleX(0.9693);transform-origin:0 0;">Disposition</div><div class="t" style="left:199.3px;top:105.70px;font-size:12.5px;color:#262626;font-weight:400;transform:scaleX(0.9480);transform-origin:0 0;">Rétablir</div><div class="t" style="left:199.3px;top:129.60px;font-size:12.5px;color:#262626;font-weight:400;transform:scaleX(0.9357);transform-origin:0 0;">Section</div><div class="t" style="left:298.5px;top:120.50px;font-size:13px;color:#7b7b7b;font-weight:700;">G</div><div class="t" style="left:343.4px;top:120.50px;font-size:13px;color:#7b7b7b;font-weight:400;">S</div><div class="t" style="left:364.6px;top:120.00px;font-size:14px;color:#7b7b7b;font-weight:400;">S</div><div class="t" style="left:383px;top:120.50px;font-size:13px;color:#7b7b7b;font-weight:400;">ab</div><div class="t" style="left:405.2px;top:118.00px;font-size:12px;color:#7b7b7b;font-weight:400;transform:scaleX(1.1490);transform-origin:0 0;">AV</div><div class="t" style="left:486px;top:88.30px;font-size:17px;color:#7b7b7b;font-weight:400;">A</div><div class="t" style="left:510px;top:89.80px;font-size:12.5px;color:#7b7b7b;font-weight:400;">A</div><div class="t" style="left:537.8px;top:88.30px;font-size:17px;color:#7b7b7b;font-weight:400;">A</div><div class="t" style="left:441.5px;top:118.20px;font-size:15px;color:#7b7b7b;font-weight:400;transform:scaleX(0.9324);transform-origin:0 0;">Aa</div><div class="t" style="left:523.5px;top:118.20px;font-size:15px;color:#7b7b7b;font-weight:400;">A</div><div class="t" style="left:928.5px;top:114.70px;font-size:12.5px;color:#262626;font-weight:400;transform:scaleX(0.9368);transform-origin:0 0;">Organiser</div><div class="t" style="left:994.4px;top:114.70px;font-size:12.5px;color:#8c8c8c;font-weight:400;transform:scaleX(0.8890);transform-origin:0 0;">Styles</div><div class="t" style="left:983px;top:130.40px;font-size:12.5px;color:#8c8c8c;font-weight:400;transform:scaleX(0.9774);transform-origin:0 0;">rapides</div><div class="t" style="left:1058.3px;top:80.50px;font-size:12.5px;color:#888888;font-weight:400;transform:scaleX(0.9245);transform-origin:0 0;">Remplissage</div><div class="t" style="left:1058.3px;top:103.60px;font-size:12.5px;color:#888888;font-weight:400;transform:scaleX(1.0096);transform-origin:0 0;">Contour</div><div class="t" style="left:1058.3px;top:126.40px;font-size:12.5px;color:#888888;font-weight:400;transform:scaleX(0.9366);transform-origin:0 0;">Effets</div><div class="t" style="left:1178.3px;top:81.00px;font-size:12.5px;color:#262626;font-weight:400;transform:scaleX(0.9255);transform-origin:0 0;">Rechercher</div><div class="t" style="left:1178.3px;top:104.00px;font-size:12.5px;color:#262626;font-weight:400;transform:scaleX(0.9335);transform-origin:0 0;">Remplacer</div><div class="t" style="left:1178.3px;top:126.90px;font-size:12.5px;color:#262626;font-weight:400;transform:scaleX(0.9473);transform-origin:0 0;">Sélectionner</div><div class="t" style="left:1282.7px;top:114.40px;font-size:12.5px;color:#262626;font-weight:400;transform:scaleX(0.9569);transform-origin:0 0;">Dicter</div><div class="t" style="left:12.1px;top:187.30px;font-size:13px;color:#f4f4f4;font-weight:400;">1</div><div class="t" style="left:448.5px;top:365.40px;font-size:43px;color:#2a2a2a;font-weight:400;transform:scaleX(0.9592);transform-origin:0 0;">Cliquez</div><div class="t" style="left:600.2px;top:365.40px;font-size:43px;color:#2a2a2a;font-weight:400;transform:scaleX(1.0226);transform-origin:0 0;">pour</div><div class="t" style="left:702.4px;top:365.40px;font-size:43px;color:#2a2a2a;font-weight:400;transform:scaleX(1.0469);transform-origin:0 0;">ajouter</div><div class="t" style="left:852.4px;top:365.40px;font-size:43px;color:#2a2a2a;font-weight:400;transform:scaleX(0.9862);transform-origin:0 0;">un</div><div class="t" style="left:913.8px;top:365.40px;font-size:43px;color:#2a2a2a;font-weight:400;">titre</div><div class="t" style="left:589.6px;top:415.50px;font-size:17px;color:#1a1a1a;font-weight:400;transform:scaleX(1.0497);transform-origin:0 0;">Cliquez pour ajouter un sous-titre</div><div class="t" style="left:1230.6px;top:190.20px;font-size:21.5px;color:#e4e4e4;font-weight:400;transform:scaleX(0.9490);transform-origin:0 0;">Sélection</div><div class="t" style="left:1239px;top:230.00px;font-size:12.5px;color:#1e1e1e;font-weight:400;transform:scaleX(1.0110);transform-origin:0 0;">Afficher tout</div><div class="t" style="left:1327px;top:230.00px;font-size:12.5px;color:#1e1e1e;font-weight:400;transform:scaleX(0.9893);transform-origin:0 0;">Masquer tout</div><div class="t" style="left:1250.4px;top:282.60px;font-size:12.5px;color:#f4f4f4;font-weight:400;transform:scaleX(0.9566);transform-origin:0 0;">Sous-titre 2</div><div class="t" style="left:1250.4px;top:301.70px;font-size:12.5px;color:#f4f4f4;font-weight:400;transform:scaleX(0.9476);transform-origin:0 0;">Titre 1</div><div class="t" style="left:942px;top:158.00px;font-size:12px;color:#262626;font-weight:700;transform:scaleX(0.9458);transform-origin:0 0;z-index:9;">Organiser les objets</div><div class="t" style="left:965.4px;top:186.90px;font-size:12.5px;color:#a8a8a8;font-weight:400;transform:scaleX(0.9470);transform-origin:0 0;z-index:9;">P<u>r</u>emier plan</div><div class="t" style="left:965.4px;top:214.80px;font-size:12.5px;color:#a8a8a8;font-weight:400;transform:scaleX(0.9668);transform-origin:0 0;z-index:9;">Arrière<u>-</u>plan</div><div class="t" style="left:965.4px;top:242.70px;font-size:12.5px;color:#a8a8a8;font-weight:400;transform:scaleX(0.9560);transform-origin:0 0;z-index:9;">A<u>v</u>ancer</div><div class="t" style="left:965.4px;top:270.40px;font-size:12.5px;color:#a8a8a8;font-weight:400;transform:scaleX(0.9214);transform-origin:0 0;z-index:9;">Recu<u>l</u>er</div><div class="t" style="left:942px;top:301.20px;font-size:12px;color:#262626;font-weight:700;transform:scaleX(0.9539);transform-origin:0 0;z-index:9;">Grouper les objets</div><div class="t" style="left:965.4px;top:330.50px;font-size:12.5px;color:#a8a8a8;font-weight:400;transform:scaleX(0.9174);transform-origin:0 0;z-index:9;">G<u>r</u>ouper</div><div class="t" style="left:965.4px;top:358.50px;font-size:12.5px;color:#a8a8a8;font-weight:400;transform:scaleX(0.8963);transform-origin:0 0;z-index:9;">Di<u>s</u>socier</div><div class="t" style="left:965.4px;top:386.50px;font-size:12.5px;color:#a8a8a8;font-weight:400;transform:scaleX(0.9330);transform-origin:0 0;z-index:9;">Regr<u>o</u>uper</div><div class="t" style="left:941.3px;top:415.30px;font-size:12px;color:#262626;font-weight:700;transform:scaleX(0.9554);transform-origin:0 0;z-index:9;">Positionner les objets</div><div class="t" style="left:965.2px;top:444.80px;font-size:12.5px;color:#262626;font-weight:400;transform:scaleX(0.9968);transform-origin:0 0;z-index:9;">Align<u>e</u>r</div><div class="t" style="left:965.2px;top:472.90px;font-size:12.5px;color:#a8a8a8;font-weight:400;transform:scaleX(0.9766);transform-origin:0 0;z-index:9;">Rotatio<u>n</u></div><div class="t" style="left:965.2px;top:503.80px;font-size:12.5px;color:#262626;font-weight:400;transform:scaleX(0.9365);transform-origin:0 0;z-index:9;">Volet Sélec<u>t</u>ion...</div><div class="t" style="left:1068.2px;top:534.70px;font-size:12px;color:#262626;font-weight:700;transform:scaleX(0.9999);transform-origin:0 0;z-index:9;">Afficher le volet Sélection</div><div class="t" style="left:1068.2px;top:555.70px;font-size:12px;color:#262626;font-weight:400;transform:scaleX(0.9883);transform-origin:0 0;z-index:9;">Afficher la liste de vos objets.</div><div class="t" style="left:1068.2px;top:585.60px;font-size:12px;color:#262626;font-weight:400;transform:scaleX(0.9722);transform-origin:0 0;z-index:9;">Vous pouvez ainsi sélectionner les objets,</div><div class="t" style="left:1068.2px;top:600.20px;font-size:12px;color:#262626;font-weight:400;transform:scaleX(1.0096);transform-origin:0 0;z-index:9;">modifier leur ordre ou changer leur visibilité.</div>
</body></html>
